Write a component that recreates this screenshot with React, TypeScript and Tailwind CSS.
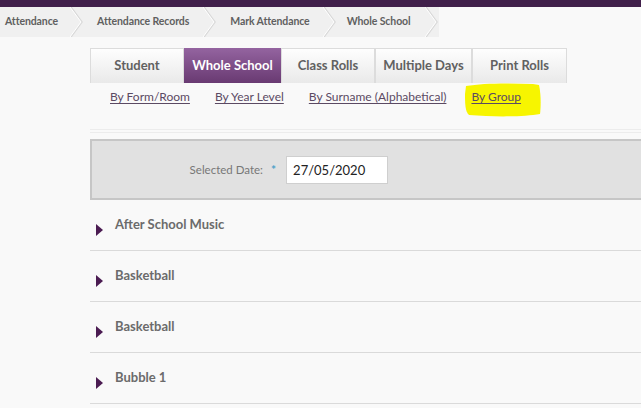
import React from "react";

const tabs = [
  { label: "Student", w: "w-[94px]" },
  { label: "Whole School", w: "w-[97px]", active: true },
  { label: "Class Rolls", w: "w-[94px]" },
  { label: "Multiple Days", w: "w-[97px]" },
  { label: "Print Rolls", w: "w-[95px]" },
];
const links = ["By Form/Room", "By Year Level", "By Surname (Alphabetical)"];
const groups = ["After School Music", "Basketball", "Basketball", "Bubble 1"];

function Chevron() {
  return (
    <svg width="14" height="30" viewBox="0 0 14 30" className="shrink-0">
      <polyline points="1,0 12,15 1,30" fill="none" stroke="#d9d9d9" strokeWidth="1.5" />
      <polyline points="0,0 11,15 0,30" fill="none" stroke="#ffffff" strokeWidth="1" />
    </svg>
  );
}

export default function App() {
  return (
    <div className="min-h-screen w-[641px] overflow-hidden bg-[#f9f9f9] font-['Lato',sans-serif]">
      {/* top bar */}
      <div className="h-[7px] bg-[#41204b]" />

      {/* breadcrumb */}
      <div className="flex h-[30px] w-fit items-center bg-[#f0f0f0] text-[10.5px] font-bold tracking-[-0.1px] text-[#606060]">
        <span className="pl-[5px] pr-[12px]">Attendance</span>
        <Chevron />
        <span className="pl-[13px] pr-[14px]">Attendance Records</span>
        <Chevron />
        <span className="pl-[13px] pr-[13px]">Mark Attendance</span>
        <Chevron />
        <span className="pl-[10px] pr-[14px]">Whole School</span>
        <Chevron />
      </div>

      <div className="ml-[90px] mt-[11px]">
        {/* tabs */}
        <div className="flex h-[35px]">
          {tabs.map((t) =>
            t.active ? (
              <div
                key={t.label}
                className={`${t.w} flex items-center justify-center bg-gradient-to-b from-[#9464a0] to-[#693a72] text-[13px] font-bold text-white`}
              >
                {t.label}
              </div>
            ) : (
              <div
                key={t.label}
                className={`${t.w} flex items-center justify-center border border-b-0 border-[#dcdcdc] bg-gradient-to-b from-[#fefefe] to-[#e9e9e9] text-[13px] font-bold text-[#616161]`}
              >
                {t.label}
              </div>
            )
          )}
        </div>

        {/* sub links */}
        <div className="flex gap-[25px] pl-[20px] pt-[5px] text-[12px] text-[#5b4a63]">
          {links.map((l) => (
            <a key={l} className="underline underline-offset-2">
              {l}
            </a>
          ))}
          <span className="relative">
            <svg
              width="80"
              height="36"
              viewBox="0 0 80 36"
              className="absolute left-[-8px] top-[-6px]"
            >
              <path
                d="M3 4 C20 1 45 1 70 2 L76 3 C78 12 78 24 77 32 C60 35 30 35 6 33 C2 30 2 20 2 12 Z"
                fill="#f7f500"
              />
            </svg>
            <a className="relative underline underline-offset-2">By Group</a>
          </span>
        </div>

        {/* divider */}
        <div className="mt-[23px] h-[4px] border-y border-[#ececec]" />

        {/* date panel */}
        <div className="mt-[6px] flex h-[61px] items-center border-2 border-r-0 border-[#c6c6c6] bg-[#e1e1e1]">
          <span className="w-[171px] text-right text-[11.5px] text-[#777]">Selected Date:</span>
          <span className="ml-[8px] text-[12px] font-bold text-[#4aa0c8]">*</span>
          <input
            readOnly
            value="27/05/2020"
            className="ml-[10px] h-[28px] w-[102px] border border-[#cfcfcf] bg-white px-[6px] text-[13px] text-[#222] outline-none"
          />
        </div>

        {/* groups */}
        {groups.map((g, i) => (
          <div key={i} className="flex h-[51px] border-b border-[#dadada] pl-[6px]">
            <svg width="7" height="12" viewBox="0 0 7 12" className="mt-[24px] shrink-0">
              <polygon points="0,0 7,6 0,12" fill="#4b1c52" />
            </svg>
            <span className="ml-[12px] mt-[15px] text-[13px] font-bold text-[#6b6b6b]">{g}</span>
          </div>
        ))}
      </div>
    </div>
  );
}
